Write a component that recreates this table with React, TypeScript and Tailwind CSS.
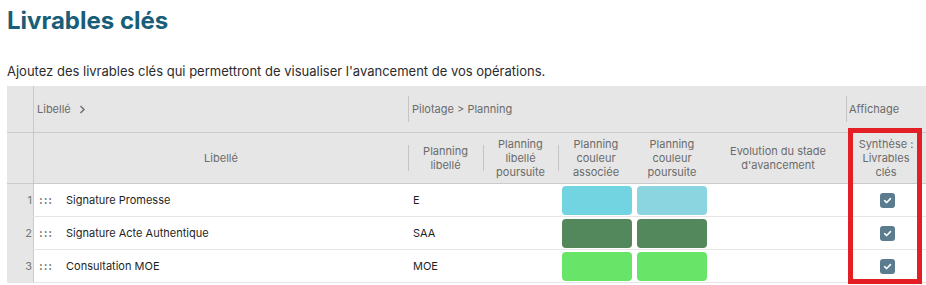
import React from 'react';

type Row = {
  id: number;
  label: string;
  planning: string;
  color1: string;
  color2: string;
};

const rows: Row[] = [
  { id: 1, label: 'Signature Promesse', planning: 'E', color1: 'bg-[#72d4e0]', color2: 'bg-[#8ad5e0]' },
  { id: 2, label: 'Signature Acte Authentique', planning: 'SAA', color1: 'bg-[#52885c]', color2: 'bg-[#52885c]' },
  { id: 3, label: 'Consultation MOE', planning: 'MOE', color1: 'bg-[#68e468]', color2: 'bg-[#68e468]' },
];

const cols = 'grid grid-cols-[27px_374px_75px_75px_76px_76px_136px_80px]';

const Divider = () => <span className="absolute left-0 top-1/2 -translate-y-1/2 h-[26px] w-px bg-[#c4c4c4]" />;

const CheckBox = () => (
  <span className="w-[15px] h-[15px] rounded-[3px] bg-[#5b7c8f] flex items-center justify-center">
    <svg width="9" height="9" viewBox="0 0 10 10" fill="none">
      <path d="M1.8 5.2 L4.1 7.3 L8.3 2.9" stroke="white" strokeWidth="1.7" strokeLinecap="round" strokeLinejoin="round" />
    </svg>
  </span>
);

const App: React.FC = () => {
  return (
    <div className="w-[926px] h-[285px] bg-white overflow-hidden font-['Inter','Liberation_Sans',sans-serif] relative">
      <h1 className="pl-[7px] pt-[6px] text-[24px] leading-[30px] font-bold text-[#195e78]">Livrables clés</h1>
      <p className="pl-[7px] mt-[27px] text-[13px] leading-[16px] text-[#2b2b2b]">
        Ajoutez des livrables clés qui permettront de visualiser l'avancement de vos opérations.
      </p>

      <div className="ml-[7px] mt-[7px] w-[940px]">
        {/* header group row */}
        <div className={`${cols} h-[47px] bg-[#e6e6e6] border-b border-[#cacaca] text-[11px] text-[#6b6b6b]`}>
          <div className="border-r border-[#cacaca]" />
          <div className="flex items-center pl-[3px] gap-2">
            Libellé
            <svg width="7" height="9" viewBox="0 0 7 9" fill="none">
              <path d="M1.5 1 L5 4.5 L1.5 8" stroke="#6b6b6b" strokeWidth="1.4" />
            </svg>
          </div>
          <div className="col-span-5 relative flex items-center pl-[4px]">
            <Divider />
            Pilotage &gt; Planning
          </div>
          <div className="relative flex items-center pl-[3px]">
            <Divider />
            Affichage
          </div>
        </div>

        {/* column header row */}
        <div className={`${cols} h-[51px] bg-[#e6e6e6] border-b border-[#cacaca] text-[11px] leading-[14px] text-[#6b6b6b] text-center`}>
          <div className="border-r border-[#cacaca]" />
          <div className="flex items-center justify-center">Libellé</div>
          <div className="relative flex items-center justify-center">
            <Divider />
            Planning<br />libellé
          </div>
          <div className="relative flex items-center justify-center">
            <Divider />
            Planning<br />libellé<br />poursuite
          </div>
          <div className="relative flex items-center justify-center">
            <Divider />
            Planning<br />couleur<br />associée
          </div>
          <div className="flex items-center justify-center">Planning<br />couleur<br />poursuite</div>
          <div className="flex items-center justify-center">Evolution du stade<br />d'avancement</div>
          <div className="flex items-center justify-center">Synthèse :<br />Livrables<br />clés</div>
        </div>

        {/* body */}
        {rows.map((r) => (
          <div key={r.id} className={`${cols} h-[33px] border-b border-[#e6e6e6] text-[11px] text-[#1f1f1f]`}>
            <div className="bg-[#e6e6e6] border-r border-[#cacaca] flex items-center justify-end pr-[1px] text-[#777]">
              {r.id}
            </div>
            <div className="flex items-center">
              <span className="pl-[5px] w-[32px] text-[#555] text-[11px] font-bold tracking-[1px]">:::</span>
              <span>{r.label}</span>
            </div>
            <div className="flex items-center pl-[5px]">{r.planning}</div>
            <div />
            <div className="flex items-center justify-end pr-[2px]">
              <span className={`w-[70px] h-[29px] rounded-[4px] ${r.color1}`} />
            </div>
            <div className="flex items-center pl-[3px]">
              <span className={`w-[70px] h-[29px] rounded-[4px] ${r.color2}`} />
            </div>
            <div />
            <div className="flex items-center justify-center pl-[2px]">
              <CheckBox />
            </div>
          </div>
        ))}
      </div>

      {/* highlight annotation */}
      <div className="absolute left-[848px] top-[128px] w-[74px] h-[156px] border-[5px] border-[#e31e24]" />
    </div>
  );
};

export default App;
